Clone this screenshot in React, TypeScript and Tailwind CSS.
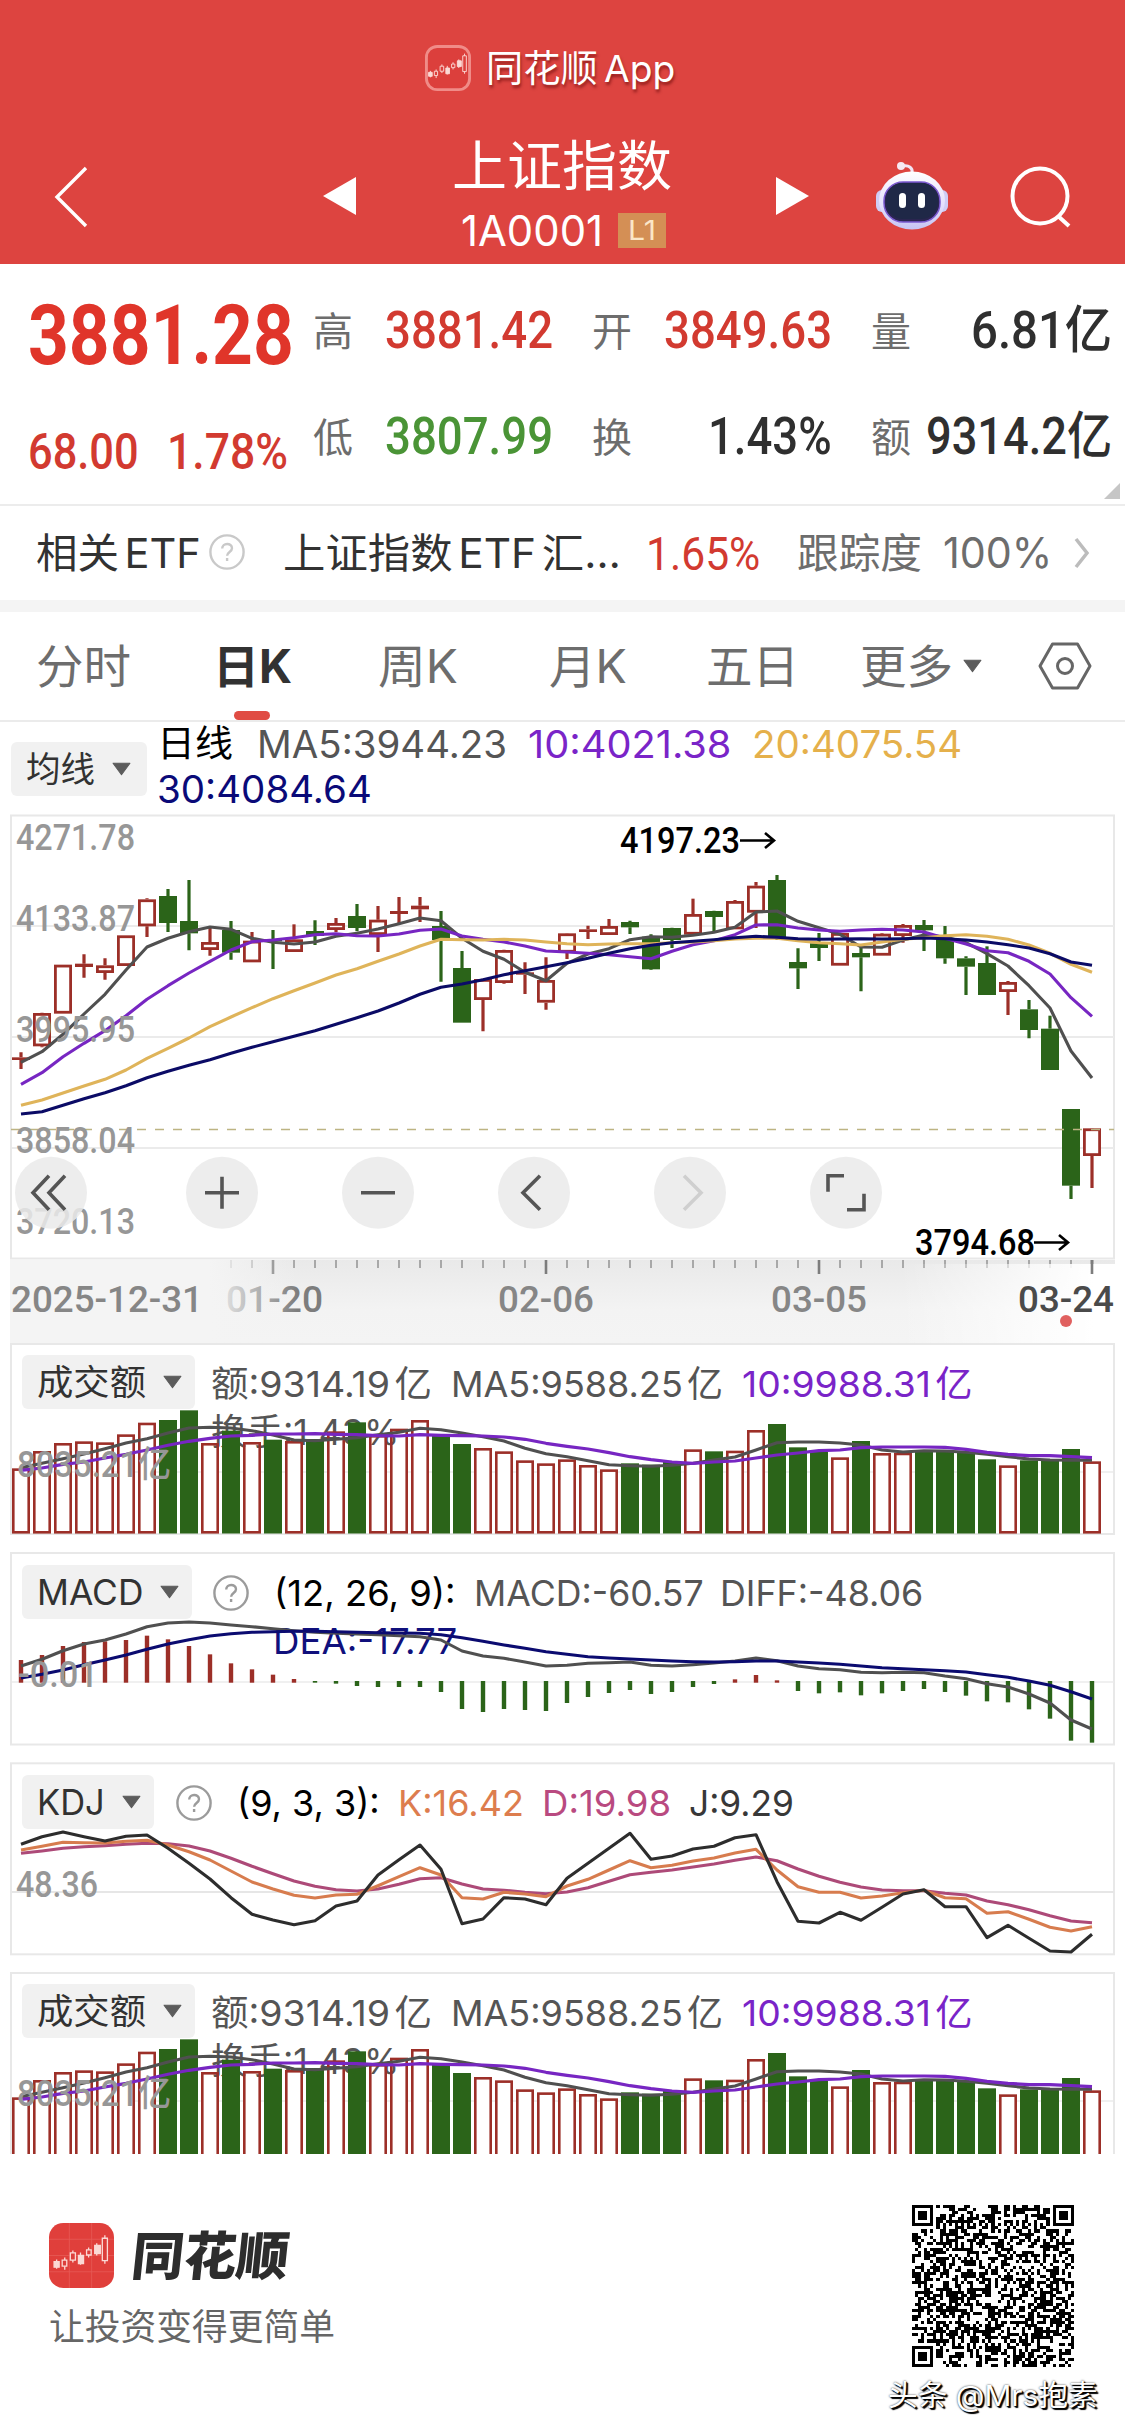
import React, { useLayoutEffect, useRef, useState } from "react";

const STEP = 21;
const RED = "#9c2f28";
const GREEN = "#2b6419";
const px = (i: number) => 21 + i * STEP;

// u/d = up or down day, then high, body top, body bottom, low (thirds of a pixel)
type Candle = ["u" | "d", number, number, number, number];

const candles: Candle[] = [
    ["u", 727, 742, 750, 777], ["u", 608, 609, 709, 712], ["u", 464, 464, 611, 611], ["u", 433, 461, 471, 503],
    ["u", 445, 466, 489, 509], ["u", 376, 376, 468, 468], ["u", 265, 268, 349, 381], ["d", 237, 258, 339, 366],
    ["d", 210, 333, 370, 421], ["u", 352, 396, 420, 437], ["d", 333, 360, 428, 449], ["u", 366, 392, 457, 457],
    ["d", 360, 388, 394, 477], ["u", 343, 388, 426, 426], ["d", 331, 363, 378, 405], ["u", 324, 339, 360, 366],
    ["d", 282, 318, 354, 364], ["u", 288, 329, 375, 426], ["u", 261, 303, 312, 340], ["u", 261, 287, 298, 336],
    ["d", 303, 348, 390, 515], ["d", 423, 474, 638, 638], ["u", 506, 507, 570, 664], ["u", 419, 420, 519, 521],
    ["u", 457, 487, 494, 552], ["u", 442, 510, 578, 599], ["u", 369, 370, 428, 447], ["u", 347, 358, 366, 387],
    ["u", 327, 348, 375, 375], ["d", 332, 336, 352, 372], ["d", 373, 380, 478, 480], ["d", 353, 354, 390, 414],
    ["u", 266, 312, 374, 374], ["d", 302, 303, 321, 363], ["u", 270, 273, 358, 358], ["u", 216, 227, 308, 354],
    ["d", 195, 210, 384, 390], ["d", 415, 456, 475, 537], ["d", 369, 400, 414, 453], ["u", 368, 369, 467, 467],
    ["d", 412, 429, 442, 544], ["u", 369, 371, 437, 437], ["u", 342, 345, 378, 398], ["d", 330, 345, 361, 423],
    ["d", 348, 384, 445, 461], ["d", 439, 445, 470, 555], ["d", 409, 459, 555, 555], ["u", 513, 516, 546, 615],
    ["d", 570, 598, 660, 685], ["d", 617, 656, 780, 780], ["d", 897, 897, 1127, 1167], ["u", 954, 955, 1038, 1134],
];

const ma5 = [757, 725, 673, 612, 553, 480, 411, 385, 365, 351, 358, 385, 397, 402, 396, 379, 370, 357, 341, 324, 332, 385, 424, 448, 487, 512, 460, 432, 416, 389, 380, 382, 376, 367, 352, 306, 303, 334, 353, 373, 411, 412, 390, 375, 380, 398, 431, 468, 527, 594, 723, 804];
const ma10 = [823, 788, 740, 700, 662, 617, 568, 527, 489, 454, 420, 395, 390, 383, 374, 371, 377, 378, 372, 361, 357, 378, 388, 396, 408, 423, 426, 430, 434, 440, 446, 424, 404, 392, 374, 345, 344, 354, 360, 364, 360, 358, 360, 366, 385, 402, 422, 428, 454, 492, 563, 619];
const ma20 = [886, 870, 849, 828, 808, 780, 745, 715, 684, 650, 621, 593, 566, 542, 519, 495, 476, 454, 432, 408, 388, 389, 390, 388, 390, 396, 401, 404, 402, 401, 401, 398, 396, 392, 387, 385, 385, 392, 398, 401, 405, 396, 388, 383, 377, 374, 379, 388, 405, 430, 463, 487];
const ma30 = [912, 905, 886, 866, 848, 827, 803, 784, 766, 749, 730, 712, 695, 679, 662, 643, 623, 603, 579, 553, 532, 522, 509, 494, 482, 470, 458, 445, 430, 416, 406, 398, 394, 389, 383, 379, 382, 386, 388, 387, 386, 387, 386, 384, 386, 390, 396, 404, 414, 431, 456, 466];

const turnover = [385, 333, 309, 304, 307, 283, 248, 240, 211, 309, 272, 306, 299, 303, 297, 274, 247, 285, 266, 240, 287, 312, 324, 334, 361, 370, 358, 375, 388, 370, 374, 366, 328, 334, 332, 270, 252, 322, 336, 352, 303, 339, 338, 331, 333, 336, 358, 376, 361, 357, 327, 364];
const turnoverMa5 = [383, 370, 356, 342, 326, 309, 296, 279, 264, 262, 264, 272, 285, 300, 302, 298, 293, 284, 277, 265, 269, 279, 290, 303, 325, 341, 350, 362, 374, 377, 379, 376, 370, 360, 351, 330, 308, 306, 306, 309, 315, 330, 336, 332, 333, 337, 343, 350, 357, 360, 361, 361];
const turnoverMa10 = [391, 384, 373, 366, 354, 343, 330, 316, 304, 295, 288, 286, 282, 282, 281, 283, 284, 287, 288, 284, 286, 287, 288, 291, 298, 310, 319, 327, 338, 350, 359, 366, 370, 366, 363, 354, 345, 339, 332, 330, 323, 321, 321, 321, 322, 328, 337, 343, 347, 347, 350, 353];

const macd = [960, 945, 918, 906, 904, 900, 887, 898, 918, 943, 970, 988, 1004, 1017, 1028, 1031, 1038, 1041, 1041, 1041, 1056, 1107, 1116, 1107, 1110, 1113, 1089, 1071, 1059, 1050, 1062, 1056, 1041, 1032, 1018, 1005, 1021, 1053, 1060, 1057, 1066, 1060, 1053, 1047, 1056, 1067, 1084, 1087, 1108, 1136, 1202, 1208];
const diff = [978, 958, 932, 912, 900, 882, 860, 849, 846, 849, 855, 860, 866, 872, 877, 880, 882, 884, 887, 890, 900, 933, 948, 955, 966, 978, 976, 970, 968, 966, 976, 978, 974, 969, 963, 954, 962, 978, 986, 989, 997, 998, 997, 998, 1008, 1016, 1031, 1041, 1062, 1089, 1140, 1167];
const dea = [1014, 1003, 990, 974, 960, 945, 928, 912, 899, 888, 881, 877, 875, 874, 874, 875, 877, 878, 879, 880, 884, 893, 904, 915, 925, 935, 943, 950, 954, 957, 960, 963, 965, 966, 965, 963, 963, 966, 969, 973, 978, 983, 986, 989, 992, 996, 1004, 1012, 1023, 1036, 1055, 1077];

const kdjJ = [283, 260, 246, 260, 273, 259, 255, 295, 340, 387, 443, 493, 510, 524, 512, 468, 453, 375, 329, 285, 358, 521, 507, 443, 447, 464, 385, 340, 295, 250, 328, 318, 297, 289, 263, 254, 395, 514, 519, 487, 511, 472, 432, 419, 470, 470, 563, 526, 565, 603, 606, 553];
const kdjK = [300, 289, 277, 278, 279, 274, 271, 285, 305, 330, 363, 396, 417, 436, 444, 435, 433, 407, 380, 353, 375, 443, 447, 427, 432, 440, 408, 388, 360, 332, 353, 346, 333, 324, 309, 298, 360, 410, 427, 427, 444, 438, 428, 421, 443, 446, 490, 485, 508, 532, 543, 530];
const kdjD = [310, 303, 295, 290, 287, 283, 280, 281, 288, 303, 325, 349, 371, 393, 409, 419, 423, 417, 403, 386, 383, 402, 417, 421, 427, 431, 426, 413, 394, 374, 367, 360, 351, 342, 331, 321, 332, 357, 379, 397, 411, 420, 422, 422, 430, 435, 453, 464, 479, 497, 513, 518];

// Text squeezed or stretched to a given width, DIN style numerals are narrower than Roboto
const Fit: React.FC<{ w: number; className?: string; children: React.ReactNode }> = ({ w, className = "", children }) => {
    const ref = useRef<HTMLSpanElement>(null);
    const [scale, setScale] = useState(1);
    useLayoutEffect(() => {
        if (ref.current) setScale(w / ref.current.offsetWidth);
    }, [w]);
    return (
        <span className={`inline-block shrink-0 whitespace-nowrap leading-none ${className}`} style={{ width: w }}>
            <span ref={ref} className="inline-block origin-left" style={{ transform: `scaleX(${scale})` }}>
                {children}
            </span>
        </span>
    );
};

const Line: React.FC<{ data: number[]; color: string; width?: number }> = ({ data, color, width = 3.1 }) => (
    <polyline
        points={data.map((v, i) => `${px(i)},${(v / 3).toFixed(1)}`).join(" ")}
        fill="none"
        stroke={color}
        strokeWidth={width}
        strokeLinejoin="round"
    />
);

const AxisText: React.FC<{ x: number; y: number; w: number; fill?: string; children: string }> = ({ x, y, w, fill = "#979797", children }) => (
    <text
        x={x}
        y={y}
        textLength={w}
        lengthAdjust="spacingAndGlyphs"
        fill={fill}
        className="font-['Roboto','Noto_Sans_CJK_SC',sans-serif] text-[36px] font-medium"
    >
        {children}
    </text>
);

const Caret = () => (
    <svg className="shrink-0" width="19" height="14" viewBox="0 0 18 13">
        <path d="M1 1h16L9 12z" fill="#5c5c5c" stroke="#5c5c5c" strokeWidth="1" strokeLinejoin="round" />
    </svg>
);

const Help: React.FC<{ color: string }> = ({ color }) => (
    <svg className="shrink-0" width="36" height="36" viewBox="0 0 36 36" fill="none" stroke={color} strokeWidth="2.4">
        <circle cx="18" cy="18" r="16.6" />
        <path d="M13.2 14.5c0-6 9.8-6 9.8-.3 0 3.8-4.9 3.8-4.9 7.6" />
        <path d="M18.1 24v3" />
    </svg>
);

const LogoCandles = () => (
    <g stroke="#fbd9d5" strokeWidth="1.3">
        <path d="M7.5 36v9M15.500 34v12M23.500 27v12M31 29v12M39 24v10M47 20v12M55 12v28" />
        <path d="M5 38h5v5.500h-5zM29 32h5v8h-5zM45 22h5.500v8h-5.500z" fill="#fbd9d5" />
        <path d="M13 36.500h4.500v6H13zM21 29.500h5v7h-5zM37 26.500h4.500v5H37zM52.500 15h5v22h-5z" fill="#dc3f3c" />
    </g>
);

const Header = () => (
    <header className="h-[264px] bg-[#dd4440] text-white">
        <div className="flex h-[136px] items-center pl-[425px]">
            <svg width="46" height="46" viewBox="0 0 64 64">
                <rect x="2" y="2" width="60" height="60" rx="15" fill="#dc3f3c" stroke="#f08c88" strokeWidth="4" />
                <LogoCandles />
            </svg>
            <Fit w={189} className="ml-[15px] text-[37px] [word-spacing:-4px] [text-shadow:1px_3px_3px_rgba(90,0,0,0.55)]">
                同花顺 App
            </Fit>
        </div>
        <div className="flex h-[128px] items-start">
            <svg className="ml-[54px] mt-[30px]" width="36" height="62" viewBox="0 0 36 62">
                <path d="M32 2L3 31l29 29" fill="none" stroke="white" strokeWidth="3.400" />
            </svg>
            <svg className="ml-[232px] mt-[40px]" width="36" height="40" viewBox="0 0 36 40">
                <path d="M34 1v38L1 20z" fill="white" />
            </svg>
            <div className="ml-[94px] w-[222px] pt-[4px]">
                <Fit w={220} className="text-[54px]">上证指数</Fit>
                <div className="mt-[20px] flex h-[33px] items-center pl-[9px]">
                    <Fit w={142} className="text-[43px]">1A0001</Fit>
                    <span className="ml-[15px] flex h-[35px] w-[48px] items-center justify-center bg-[#d48f55] text-[#fbe6c8]">
                        <Fit w={28} className="text-[27px]">L1</Fit>
                    </span>
                </div>
            </div>
            <svg className="ml-[100px] mt-[40px]" width="36" height="40" viewBox="0 0 36 40">
                <path d="M2 1v38l33-19z" fill="white" />
            </svg>
            <svg className="ml-[65px] mt-[24px]" width="74" height="70" viewBox="0 0 74 70">
                <defs>
                    <linearGradient id="shell" x1="0" y1="0" x2="0" y2="1">
                        <stop offset="0" stopColor="#ffffff" />
                        <stop offset="0.6" stopColor="#e3defb" />
                        <stop offset="1" stopColor="#c6c4f4" />
                    </linearGradient>
                </defs>
                <path d="M37 13c1-5-3-8-9-7" fill="none" stroke="#f2e6f5" strokeWidth="3" />
                <circle cx="26" cy="6" r="4" fill="#f7e9f2" />
                <rect x="1" y="30" width="12" height="22" rx="6" fill="#cfcdf5" />
                <rect x="61" y="30" width="12" height="22" rx="6" fill="#cfcdf5" />
                <ellipse cx="37" cy="40.500" rx="33" ry="29" fill="url(#shell)" />
                <rect x="9" y="22" width="56" height="40" rx="19" fill="#2a2550" stroke="#7a58cf" strokeWidth="1.500" />
                <rect x="11" y="23" width="52" height="36" rx="17" fill="#1f2847" />
                <rect x="24" y="33" width="7" height="15" rx="3.500" fill="white" />
                <rect x="43" y="33" width="7" height="15" rx="3.500" fill="white" />
            </svg>
            <svg className="ml-[61px] mt-[29px]" width="64" height="64" viewBox="0 0 64 64" fill="none" stroke="white" strokeWidth="4">
                <circle cx="30" cy="31" r="27.500" />
                <path d="M48 51l11 10" />
            </svg>
        </div>
    </header>
);

const Stat: React.FC<{ label: string; value: string; w: number; color: string }> = ({ label, value, w, color }) => (
    <div className="flex h-[50px] items-center justify-between">
        <span className="mt-[4px] text-[40px] leading-none text-[#6d6d6d]">{label}</span>
        <Fit w={w} className={`font-['Roboto','Noto_Sans_CJK_SC',sans-serif] text-[51px] font-medium ${color}`}>{value}</Fit>
    </div>
);

const Quote = () => (
    <section className="relative flex h-[242px] border-b-2 border-[#ececec] font-medium">
        <div className="w-[313px] pl-[28px] pt-[30px] font-['Roboto',sans-serif] text-[#e0352a]">
            <Fit w={266} className="block text-[83px] font-bold">3881.28</Fit>
            <div className="mt-[50px] flex gap-[28px] text-[#d23a30]">
                <Fit w={111} className="text-[50px]">68.00</Fit>
                <Fit w={121} className="text-[50px]">1.78%</Fit>
            </div>
        </div>
        <div className="grid w-[800px] grid-cols-[240px_240px_241px] content-start gap-x-[39px] gap-y-[56px] pt-[41px] font-normal">
            <Stat label="高" value="3881.42" w={168} color="text-[#d23a30]" />
            <Stat label="开" value="3849.63" w={168} color="text-[#d23a30]" />
            <Stat label="量" value="6.81亿" w={141} color="text-[#2f2f2f]" />
            <Stat label="低" value="3807.99" w={168} color="text-[#4a9436]" />
            <Stat label="换" value="1.43%" w={124} color="text-[#2f2f2f]" />
            <Stat label="额" value="9314.2亿" w={186} color="text-[#2f2f2f]" />
        </div>
        <svg className="absolute bottom-[5px] right-[5px]" width="16" height="16" viewBox="0 0 16 16">
            <path d="M16 0v16H0z" fill="#c6c6c6" />
        </svg>
    </section>
);

const EtfRow = () => (
    <section className="flex h-[106px] items-center border-b-[12px] border-[#f4f4f4] pl-[36px] text-[#323232]">
        <Fit w={165} className="text-[41px] [word-spacing:-6px]">相关 ETF</Fit>
        <span className="-mt-[2px] ml-[8px]"><Help color="#c9c9c9" /></span>
        <Fit w={338} className="ml-[38px] text-[41px] [word-spacing:-6px]">上证指数 ETF 汇…</Fit>
        <Fit w={114} className="ml-[25px] mt-[1px] font-['Roboto',sans-serif] text-[46px] text-[#d23a30]">1.65%</Fit>
        <Fit w={125} className="ml-[37px] text-[41px] text-[#6d6d6d]">跟踪度</Fit>
        <Fit w={109} className="ml-[21px] text-[42px] text-[#6d6d6d]">100%</Fit>
        <svg className="ml-[21px]" width="18" height="32" viewBox="0 0 18 32">
            <path d="M3 2l11 14L3 30" fill="none" stroke="#bcbcbc" strokeWidth="3.500" />
        </svg>
    </section>
);

const Tabs = () => (
    <nav className="relative flex h-[110px] items-center border-b-2 border-[#ebebeb] pl-[36px] text-[46px] text-[#6d6d6d]">
        <Fit w={95}>分时</Fit>
        <Fit w={79} className="ml-[82px] font-bold text-[#323232]">日K</Fit>
        <Fit w={80} className="ml-[86px]">周K</Fit>
        <Fit w={78} className="ml-[91px]">月K</Fit>
        <Fit w={93} className="ml-[79px]">五日</Fit>
        <Fit w={93} className="ml-[61px]">更多</Fit>
        <span className="ml-[10px] flex"><Caret /></span>
        <svg className="ml-[56px]" width="54" height="50" viewBox="0 0 54 50" fill="none" stroke="#666" strokeWidth="3">
            <path d="M14.500 3h25L52 25 39.500 47h-25L2 25z" strokeLinejoin="round" />
            <circle cx="27" cy="25" r="7.500" />
        </svg>
        <span className="absolute bottom-0 left-[234px] h-[9px] w-[36px] rounded-md bg-[#e04c43]" />
    </nav>
);

const Picker: React.FC<{ label: string; w: number; className?: string }> = ({ label, w, className = "" }) => (
    <span className={`flex h-[54px] shrink-0 items-center rounded-[6px] bg-[#f1f1f1] pl-[15px] text-[35px] text-[#323232] ${className}`}>
        <Fit w={w}>{label}</Fit>
        <span className="ml-[17px] flex"><Caret /></span>
    </span>
);

const MaLegend = () => (
    <section className="flex h-[93px] pl-[11px] text-[38px]">
        <Picker label="均线" w={69} className="mt-[20px] w-[136px]" />
        <div className="ml-[10px] flex flex-col gap-[7px] pt-[3px]">
            <div className="flex">
                <Fit w={76} className="text-[37px] text-black">日线</Fit>
                <Fit w={250} className="ml-[24px] text-[#555]">MA5:3944.23</Fit>
                <Fit w={203} className="ml-[21px] text-[#7a24c8]">10:4021.38</Fit>
                <Fit w={210} className="ml-[21px] text-[#e5b04b]">20:4075.54</Fit>
            </div>
            <Fit w={215} className="text-[#0a0a78]">30:4084.64</Fit>
        </div>
    </section>
);

const tools = [
    { x: 51, d: "M-2-17L-18 0l16 17M14-17L-2 0l16 17" },
    { x: 222, d: "M-17 0h34M0-16v32" },
    { x: 378, d: "M-17 0h34" },
    { x: 534, d: "M6-17L-11 0l17 17" },
    { x: 690, d: "M-6-17L11 0l-17 17", muted: true },
    { x: 846, d: "M-2-17h-16v16M18 1v16H1" },
];

const KChart = () => (
    <svg className="ml-[10px] block overflow-visible" width="1106" height="445" viewBox="10 5 1106 445">
        <rect x="11" y="5.500" width="1103" height="443" fill="white" stroke="#e8e8e8" strokeWidth="2" />
        <path d="M12 116h1102M12 227h1102M12 338h1102" stroke="#ebebeb" strokeWidth="2" />
        {candles.map(([dir, high, top, bottom, low], i) => {
            const color = dir === "u" ? RED : GREEN;
            const h = (bottom - top) / 3;
            const hollow = dir === "u" && h > 6;
            return (
                <g key={i}>
                    <path d={`M${px(i)} ${high / 3}V${top / 3}M${px(i)} ${bottom / 3}V${low / 3}`} stroke={color} strokeWidth="3.200" />
                    {hollow ? (
                        <rect x={px(i) - 7.600} y={top / 3 + 1.400} width="15.200" height={h - 2.800} fill="white" stroke={color} strokeWidth="2.800" />
                    ) : (
                        <rect x={px(i) - 9} y={top / 3} width="18" height={h} fill={color} />
                    )}
                </g>
            );
        })}
        <path d="M11 319.400h1103" stroke="#bdb483" strokeWidth="1.500" strokeDasharray="9 9" />
        <Line data={ma5} color="#505050" />
        <Line data={ma10} color="#7726c2" />
        <Line data={ma20} color="#dfb45a" />
        <Line data={ma30} color="#0b0b66" />
        <AxisText x={16} y={40} w={119}>4271.78</AxisText>
        <AxisText x={16} y={121} w={119}>4133.87</AxisText>
        <AxisText x={16} y={232} w={119}>3995.95</AxisText>
        <AxisText x={16} y={343} w={119}>3858.04</AxisText>
        <AxisText x={16} y={424} w={119}>3720.13</AxisText>
        <AxisText x={620} y={43} w={120} fill="#000">4197.23</AxisText>
        <AxisText x={915} y={445} w={120} fill="#000">3794.68</AxisText>
        <path d="M740 30.500h33M765 23l9 7.500-9 7.500M1034 432.500h33M1059 425l9 7.500-9 7.500" fill="none" stroke="black" strokeWidth="2.600" />
        {tools.map((t) => (
            <g key={t.x} transform={`translate(${t.x} 382.700)`}>
                <circle r="36" fill="#eaeaea" fillOpacity="0.85" />
                <path d={t.d} fill="none" stroke={t.muted ? "#cfcfcf" : "#555"} strokeWidth="3.600" />
            </g>
        ))}
    </svg>
);

const TimeAxis = () => (
    <svg className="ml-[10px] block" width="1106" height="83" viewBox="10 1260 1106 83">
        <defs>
            <linearGradient id="axisDown" x1="0" y1="0" x2="0" y2="1">
                <stop offset="0" stopColor="#e9e9e9" />
                <stop offset="0.600" stopColor="#f3f3f3" />
                <stop offset="1" stopColor="#f4f4f4" />
            </linearGradient>
            <linearGradient id="axisLeft">
                <stop offset="0.180" stopColor="#f4f4f4" />
                <stop offset="0.260" stopColor="#f4f4f4" stopOpacity="0" />
            </linearGradient>
            <linearGradient id="axisRight">
                <stop offset="0" stopColor="white" stopOpacity="0" />
                <stop offset="0.900" stopColor="white" />
            </linearGradient>
        </defs>
        <rect x="10" y="1260" width="1105" height="83" fill="url(#axisDown)" />
        {candles.slice(10).map((_, n) => {
            const i = n + 10;
            const major = (i - 12) % 13 === 0;
            return <path key={i} d={`M${px(i)} 1260v${major ? 14 : 8}`} stroke={major ? "#7d7d7d" : "#a8a8a8"} strokeWidth={major ? 2.600 : 2} />;
        })}
        <AxisText x={226} y={1311.500} w={97} fill="#7d7d7d">01-20</AxisText>
        <rect x="10" y="1260" width="1105" height="83" fill="url(#axisLeft)" />
        <rect x="900" y="1264" width="215" height="79" fill="url(#axisRight)" />
        <path d="M1092 1260v14" stroke="#7d7d7d" strokeWidth="2.600" />
        <AxisText x={11} y={1311.500} w={192} fill="#868686">2025-12-31</AxisText>
        <AxisText x={498} y={1311.500} w={96} fill="#868686">02-06</AxisText>
        <AxisText x={771} y={1311.500} w={96} fill="#868686">03-05</AxisText>
        <AxisText x={1018} y={1311.500} w={96} fill="#4a4a4a">03-24</AxisText>
        <circle cx="1066" cy="1321" r="6" fill="#e0605f" />
    </svg>
);

const TurnoverPanel: React.FC<{ cut?: boolean }> = ({ cut }) => (
    <section className={`relative ml-[10px] w-[1106px] overflow-hidden text-[36px] text-[#555] ${cut ? "h-[182px]" : "h-[192px]"}`}>
        <div className="flex h-[76px] items-center pl-[12px] pt-[5px] [word-spacing:-6px]">
            <Picker label="成交额" w={109} className="-mt-[3px] w-[173px]" />
            <Fit w={221} className="ml-[16px]">额:9314.19 亿</Fit>
            <Fit w={272} className="ml-[19px]">MA5:9588.25 亿</Fit>
            <Fit w={231} className="ml-[19px] text-[#7a24c8]">10:9988.31 亿</Fit>
        </div>
        <div className="-mt-[14px] pl-[201px]">
            <Fit w={188}>换手:1.43%</Fit>
        </div>
        <svg className="absolute inset-0" width="1106" height="192" viewBox="10 3 1106 192">
            <rect x="11" y="4" width="1103" height="190" fill="none" stroke="#e8e8e8" strokeWidth="2" />
            <path d="M30 132h1071" stroke="#ebebeb" strokeWidth="1.500" strokeDasharray="3 18" />
            <path d="M1101 132h12" stroke="#ebebeb" strokeWidth="1.500" />
            {turnover.map((v, i) =>
                candles[i][0] === "u" ? (
                    <rect key={i} x={px(i) - 7.700} y={v / 3 + 1.300} width="15.400" height={191 - v / 3} fill="none" stroke={RED} strokeWidth="2.600" />
                ) : (
                    <rect key={i} x={px(i) - 9} y={v / 3} width="18" height={193.500 - v / 3} fill={GREEN} />
                )
            )}
            <Line data={turnoverMa5} color="#505050" />
            <Line data={turnoverMa10} color="#7726c2" width={3.200} />
            <AxisText x={17} y={137} w={154}>8035.21亿</AxisText>
        </svg>
    </section>
);

const MacdPanel = () => (
    <section className="relative ml-[10px] h-[194px] w-[1106px] text-[36px] text-[#555]">
        <div className="flex h-[81px] items-center pl-[12px]">
            <Picker label="MACD" w={106} className="-mt-[1px] w-[170px]" />
            <span className="ml-[21px]"><Help color="#9b9b9b" /></span>
            <Fit w={182} className="ml-[25px] mt-[1px] text-black">(12, 26, 9):</Fit>
            <Fit w={230} className="ml-[18px] mt-[1px]">MACD:-60.57</Fit>
            <Fit w={203} className="ml-[16px] mt-[1px]">DIFF:-48.06</Fit>
        </div>
        <div className="-mt-[19px] pl-[263px] text-[#10107c]">
            <Fit w={184}>DEA:-17.77</Fit>
        </div>
        <svg className="absolute inset-0" width="1106" height="194" viewBox="10 212 1106 194">
            <rect x="11" y="213" width="1103" height="191.500" fill="none" stroke="#e8e8e8" strokeWidth="2" />
            <path d="M12 342h1102" stroke="#ebebeb" strokeWidth="1.500" />
            {macd.map((v, i) => (
                <path
                    key={i}
                    d={v < 1025 ? `M${px(i)} ${v / 3}V342.700` : `M${px(i)} 341V${v / 3}`}
                    stroke={v < 1025 ? RED : GREEN}
                    strokeWidth="4.400"
                />
            ))}
            <Line data={diff} color="#505050" />
            <Line data={dea} color="#0b0b70" />
            <AxisText x={18} y={346.500} w={80}>-0.01</AxisText>
        </svg>
    </section>
);

const KdjPanel = () => (
    <section className="relative ml-[10px] h-[194px] w-[1106px] text-[36px]">
        <div className="flex h-[81px] items-center pl-[12px]">
            <Picker label="KDJ" w={68} className="-mt-[1px] w-[132px]" />
            <span className="ml-[22px]"><Help color="#9b9b9b" /></span>
            <Fit w={143} className="ml-[25px] mt-[1px] text-black">(9, 3, 3):</Fit>
            <Fit w={126} className="ml-[18px] mt-[1px] text-[#dd7d4e]">K:16.42</Fit>
            <Fit w={129} className="ml-[18px] mt-[1px] text-[#b94a80]">D:19.98</Fit>
            <Fit w={105} className="ml-[18px] mt-[1px] text-[#383838]">J:9.29</Fit>
        </div>
        <svg className="absolute inset-0" width="1106" height="194" viewBox="10 12 1106 194">
            <rect x="11" y="13.300" width="1103" height="191" fill="none" stroke="#e8e8e8" strokeWidth="2" />
            <path d="M12 142h1102" stroke="#e6e6e6" strokeWidth="2" />
            <Line data={kdjD} color="#ad4a78" />
            <Line data={kdjK} color="#d77c4e" />
            <Line data={kdjJ} color="#2d2d2d" />
            <AxisText x={16} y={147} w={82}>48.36</AxisText>
        </svg>
    </section>
);

const QR = 53;

// Finder squares and separators in three corners, scattered modules elsewhere
const isDark = (x: number, y: number) => {
    const corners = [[0, 0], [QR - 7, 0], [0, QR - 7]];
    for (const [cx, cy] of corners) {
        const dx = Math.abs(x - cx - 3);
        const dy = Math.abs(y - cy - 3);
        const ring = Math.max(dx, dy);
        if (ring <= 4) return ring === 3 || ring <= 1;
    }
    if (x === 6) return y % 2 === 0;
    if (y === 6) return x % 2 === 0;
    let n = (x * 374761393 + y * 668265263) | 0;
    n = Math.imul(n ^ (n >>> 13), 1274126177);
    return ((n ^ (n >>> 16)) & 7) < 4;
};

const QrCode = () => {
    let d = "";
    for (let y = 0; y < QR; y++) {
        for (let x = 0; x < QR; x++) {
            if (isDark(x, y)) d += `M${x} ${y}h1v1h-1z`;
        }
    }
    return (
        <svg width="162" height="162" viewBox={`0 0 ${QR} ${QR}`} shapeRendering="crispEdges">
            <path d={d} fill="black" />
        </svg>
    );
};

const Footer = () => (
    <footer className="flex h-[281px] justify-between bg-white">
        <div className="pl-[49px] pt-[69px]">
            <div className="flex items-center">
                <svg width="65" height="65" viewBox="0 0 64 64">
                    <rect width="64" height="64" rx="14" fill="#e03f3b" />
                    <path d="M0 16h64M0 32h64M0 48h64M20 0v64M42 0v64" stroke="#e65a55" strokeWidth="0.800" />
                    <LogoCandles />
                </svg>
                <Fit w={157} className="ml-[18px] mt-[2px] -skew-x-6 text-[52px] font-black text-[#2d2d2d]">同花顺</Fit>
            </div>
            <Fit w={286} className="mt-[21px] text-[36px] text-[#666]">让投资变得更简单</Fit>
        </div>
        <div className="flex w-[237px] flex-col pt-[51px]">
            <div className="pl-[24px]"><QrCode /></div>
            <Fit w={210} className="mt-[14px] text-[29px] text-white [text-shadow:1px_1px_1px_#000,2px_2px_1px_#000,0_0_2px_#333]">
                头条 @Mrs抱素
            </Fit>
        </div>
    </footer>
);

const App: React.FC = () => {
    return (
        <div className="h-[2436px] w-[1125px] overflow-hidden bg-white font-['Inter','Noto_Sans_CJK_SC',sans-serif]">
            <Header />
            <Quote />
            <EtfRow />
            <Tabs />
            <MaLegend />
            <KChart />
            <TimeAxis />
            <TurnoverPanel />
            <div className="h-[17px]" />
            <MacdPanel />
            <div className="h-[16px]" />
            <KdjPanel />
            <div className="h-[16px]" />
            <TurnoverPanel cut />
            <Footer />
        </div>
    );
};

export default App;
